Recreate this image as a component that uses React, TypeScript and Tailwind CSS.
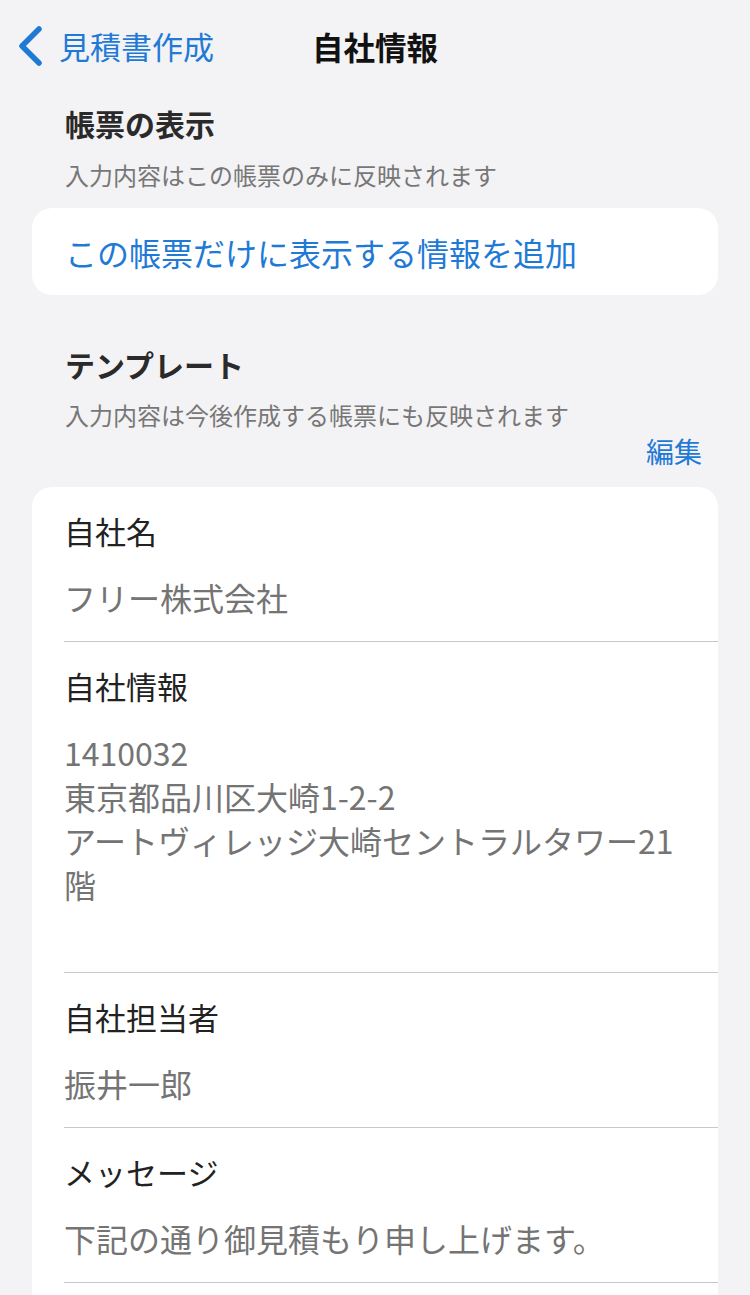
import React from "react";

const font = { fontFamily: '"Noto Sans CJK JP", "Noto Sans", sans-serif' };

function Row({ label, children, minH }: { label: string; children: React.ReactNode; minH?: string }) {
  return (
    <div className="ml-[32px] border-b border-[#c8c8cb] pt-[22px] pb-[22px] pr-[30px]">
      <div className="text-[31px] leading-[44px] text-[#222222]">{label}</div>
      <div className={`mt-[22px] text-[32px] leading-[44px] text-[#747474] ${minH ?? ""}`}>{children}</div>
    </div>
  );
}

export default function App() {
  return (
    <div className="min-h-[1295px] w-[750px] bg-[#f3f2f4] overflow-hidden" style={font}>
      {/* Nav bar */}
      <div className="grid h-[92px] grid-cols-[1fr_auto_1fr] items-center">
        <div className="flex items-center pl-[17px]">
          <svg width="28" height="42" viewBox="0 0 28 42" className="mr-[14px]">
            <path d="M22 4 L5 21 L22 38" fill="none" stroke="#1f7ad6" strokeWidth="5.5" strokeLinecap="round" strokeLinejoin="round" />
          </svg>
          <span className="text-[31px] leading-[40px] text-[#1f7ad6]">見積書作成</span>
        </div>
        <div className="text-[31.5px] font-bold leading-[40px] text-[#111111]">自社情報</div>
        <div />
      </div>

      {/* 帳票の表示 */}
      <div className="mt-[11px] px-[65px]">
        <div className="text-[30px] font-bold leading-[40px] text-[#2a2a2a]">帳票の表示</div>
        <div className="mt-[15px] text-[24px] leading-[34px] text-[#777777]">入力内容はこの帳票のみに反映されます</div>
      </div>
      <div className="mx-[32px] mt-[16px] flex h-[87px] items-center rounded-[20px] bg-white pl-[33px]">
        <span className="text-[32px] leading-[44px] text-[#1f7ad6]">この帳票だけに表示する情報を追加</span>
      </div>

      {/* テンプレート */}
      <div className="mt-[49px] px-[65px]">
        <div className="text-[30px] font-bold leading-[40px] text-[#2a2a2a]">テンプレート</div>
        <div className="mt-[14px] text-[24px] leading-[34px] text-[#777777]">入力内容は今後作成する帳票にも反映されます</div>
      </div>
      <div className="mt-px flex justify-end pr-[48px]">
        <span className="text-[28px] leading-[36px] text-[#1f7ad6]">編集</span>
      </div>

      <div className="mx-[32px] mt-[18px] rounded-t-[20px] bg-white pb-[60px]">
        <Row label="自社名">フリー株式会社</Row>
        <Row label="自社情報" minH="min-h-[220px]">
          <div>1410032</div>
          <div>東京都品川区大崎1-2-2</div>
          <div>アートヴィレッジ大崎セントラルタワー21</div>
          <div>階</div>
        </Row>
        <Row label="自社担当者">振井一郎</Row>
        <Row label="メッセージ">下記の通り御見積もり申し上げます。</Row>
      </div>
    </div>
  );
}
